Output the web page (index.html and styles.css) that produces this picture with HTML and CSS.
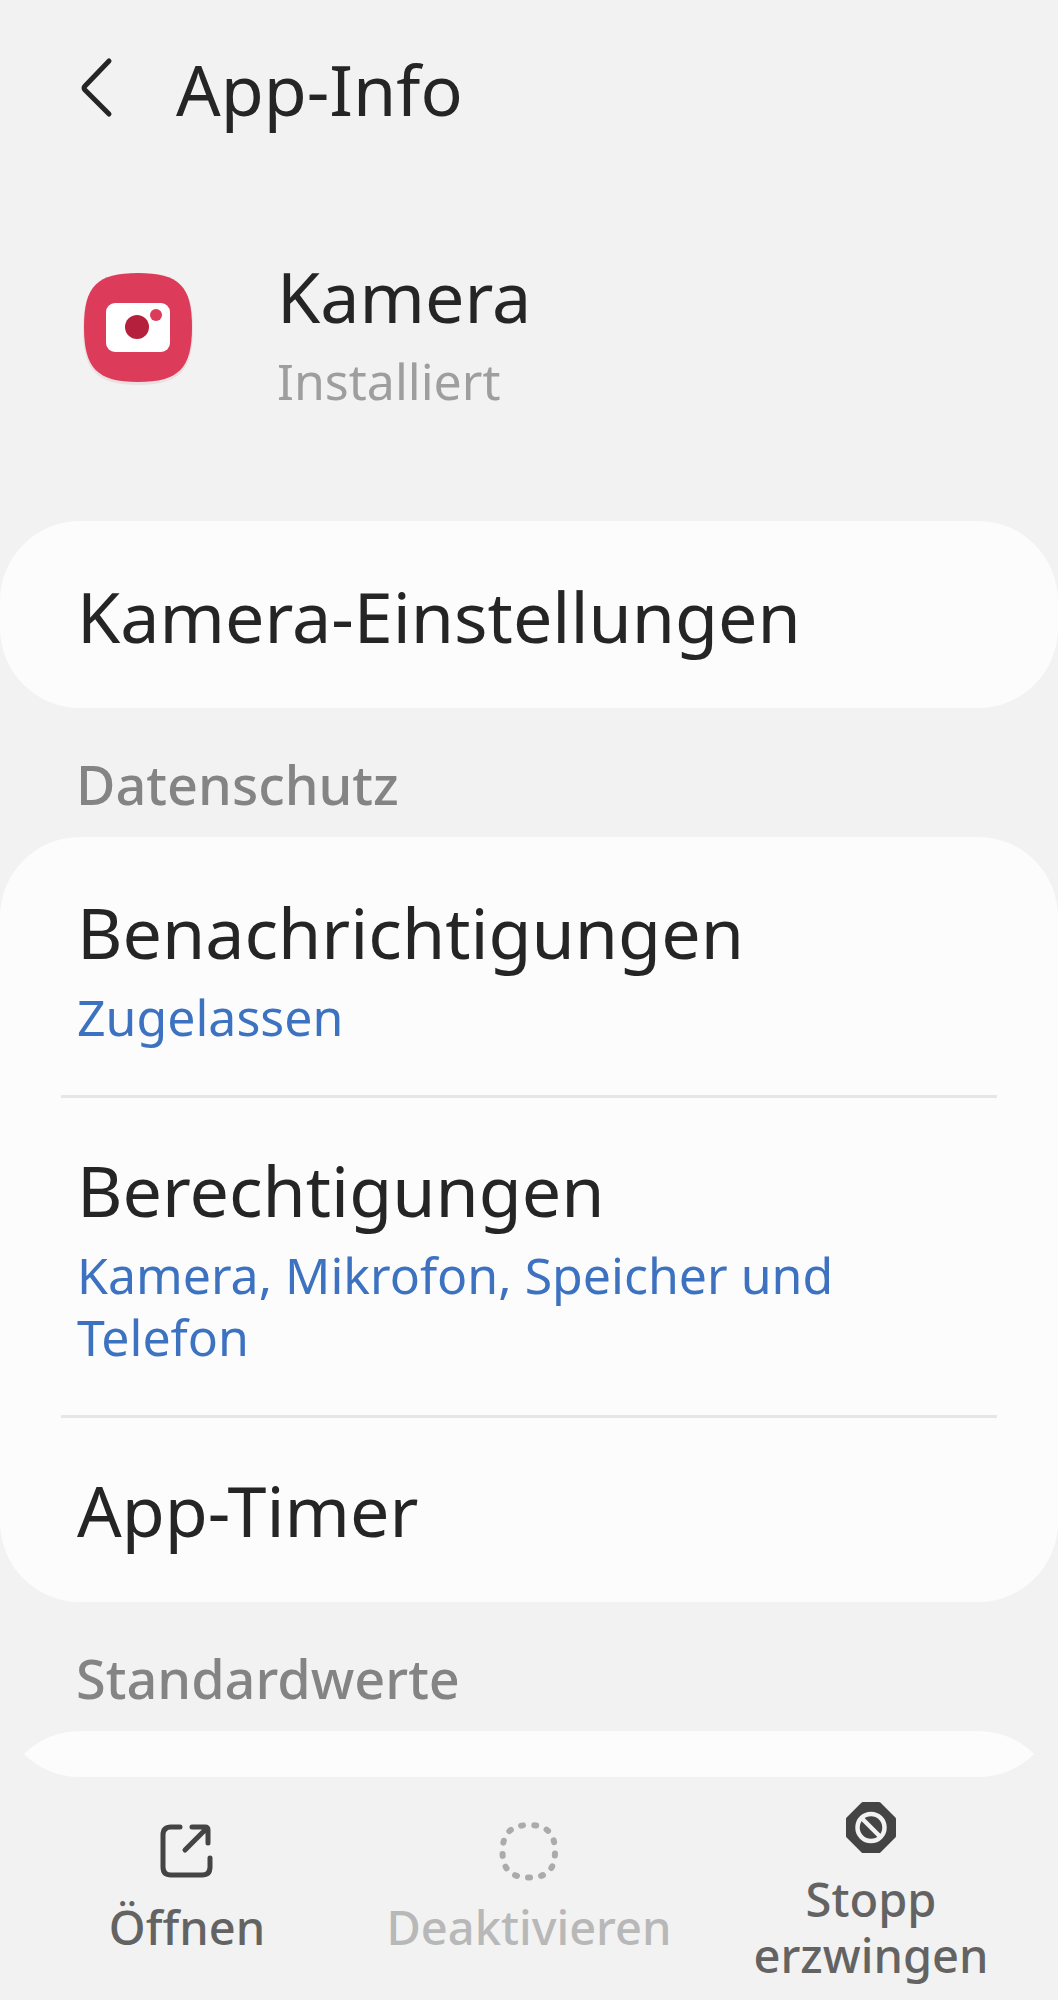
FILE: index.html
```html
<!DOCTYPE html>
<html lang="de">
<head>
  <meta charset="utf-8">
  <meta name="viewport" content="width=device-width, initial-scale=1">
  <title>App-Info</title>
  <link rel="stylesheet" href="styles.css">
</head>
<body>
  <main class="scroll">
    <header class="header">
      <button class="back" type="button" aria-label="Zurück">
        <svg width="32" height="60" viewBox="0 0 32 60" fill="none" stroke="currentColor" stroke-width="5" stroke-linecap="round" stroke-linejoin="round"><path d="M28 2 4 27Q2 29 4 31L28 55"/></svg>
      </button>
      <h1 class="title">App-Info</h1>
    </header>

    <section class="app">
      <svg class="app-icon" width="112" height="116" viewBox="0 0 112 116">
        <path d="M56 3C98 3 111 16 111 57S98 113 56 113 1 98 1 57 14 3 56 3Z" fill="#ecdfe1"/>
        <path d="M56 1C97 1 110 14 110 55S97 110 56 110 2 96 2 55 15 1 56 1Z" fill="#dc3b59"/>
        <rect x="24" y="31" width="64" height="49" rx="9" fill="#fff"/>
        <circle cx="55" cy="55" r="12" fill="#b5203c"/>
        <circle cx="74" cy="43" r="6" fill="#dc3b59"/>
      </svg>
      <div>
        <h2 class="name">Kamera</h2>
        <p class="state">Installiert</p>
      </div>
    </section>

    <section class="card">
      <a class="row" href="#kamera-einstellungen"><span class="label">Kamera-Einstellungen</span></a>
    </section>

    <h3 class="section-title">Datenschutz</h3>
    <section class="card">
      <a class="row" href="#benachrichtigungen">
        <span class="label">Benachrichtigungen</span>
        <span class="value">Zugelassen</span>
      </a>
      <a class="row" href="#berechtigungen">
        <span class="label">Berechtigungen</span>
        <span class="value">Kamera, Mikrofon, Speicher und Telefon</span>
      </a>
      <a class="row" href="#app-timer"><span class="label">App-Timer</span></a>
    </section>

    <h3 class="section-title">Standardwerte</h3>
    <section class="card card-rest"></section>
  </main>

  <nav class="actions">
    <button class="action" type="button">
      <svg width="60" height="60" viewBox="0 0 60 60" fill="none" stroke="#444" stroke-width="5" stroke-linecap="round" stroke-linejoin="round"><path d="M23 4H14Q6 4 6 12V44Q6 52 14 52H45Q53 52 53 44V35M35 4H48Q51 4 51 7V20M50 5 28 27"/></svg>
      <span>Öffnen</span>
    </button>
    <button class="action" type="button" disabled>
      <svg width="60" height="60" viewBox="0 0 60 60" fill="none" stroke="#ababab" stroke-width="6" stroke-linecap="round"><path pathLength="130" stroke-dasharray="1.5 8.5" stroke-dashoffset="-4" d="M30 2C48 2 56 10.500 56 28.500S48 54.500 30 54.500 3.500 46.500 3.500 28.500 12 2 30 2Z"/></svg>
      <span>Deaktivieren</span>
    </button>
    <button class="action" type="button">
      <svg width="60" height="60" viewBox="0 0 60 60" fill="none"><path d="M22 9H38L53 24V41L38 56H22L7 41V24Z" fill="#444" stroke="#444" stroke-width="4" stroke-linejoin="round"/><circle cx="30" cy="32.500" r="13.500" stroke="#f2f2f2" stroke-width="4.500"/><path d="M20.500 23 39.500 42" stroke="#f2f2f2" stroke-width="4.500"/></svg>
      <span>Stopp erzwingen</span>
    </button>
  </nav>
</body>
</html>
```
FILE: styles.css
```css
* {
  box-sizing: border-box;
  margin: 0;
}

body {
  display: flex;
  flex-direction: column;
  height: 100vh;
  background: #f2f2f2;
  color: #252525;
  font-family: "Noto Sans", sans-serif;
}

button {
  padding: 0;
  border: 0;
  background: none;
  color: inherit;
  font: inherit;
}

svg {
  display: block;
  flex: none;
  overflow: visible;
}

.scroll {
  display: flex;
  flex: 1;
  flex-direction: column;
  min-height: 0;
  overflow: hidden;
  border-radius: 0 0 80px 80px;
}

.header {
  display: flex;
  align-items: center;
  gap: 63px;
  padding: 41px 81px 0;
}

.title,
.name,
.label {
  font-size: 70px;
  font-weight: 400;
  line-height: 96px;
}

.app {
  display: flex;
  align-items: center;
  gap: 83px;
  padding: 111px 82px 109px;
}

.state,
.value {
  margin-top: 6px;
  font-size: 50px;
  line-height: 62px;
}

.state {
  color: #9e9e9e;
}

.card {
  flex: none;
  padding: 3px 61px 0;
  border-radius: 80px;
  background: #fcfcfc;
}

/* Continues below the action bar */
.card-rest {
  min-height: 184px;
}

.row {
  display: flex;
  flex-direction: column;
  padding: 44px 16px;
  color: inherit;
  text-decoration: none;
}

.row + .row {
  border-top: 3px solid #e6e6e6;
}

.value {
  margin-bottom: 3px;
  color: #3c72c0;
}

.section-title {
  padding: 44px 76px 20px;
  color: #848484;
  font-size: 54px;
  font-weight: 500;
  line-height: 65px;
}

.actions {
  display: grid;
  grid-template-columns: repeat(3, 1fr);
  min-height: 223px;
  padding: 0 16px;
}

.action {
  display: flex;
  flex-direction: column;
  align-items: center;
  justify-content: center;
  gap: 16px;
  padding: 0 40px;
  color: #636363;
  font-size: 47px;
  font-weight: 500;
  line-height: 56px;
}

.action:disabled {
  padding: 0;
  color: #b8b8b8;
}
```
